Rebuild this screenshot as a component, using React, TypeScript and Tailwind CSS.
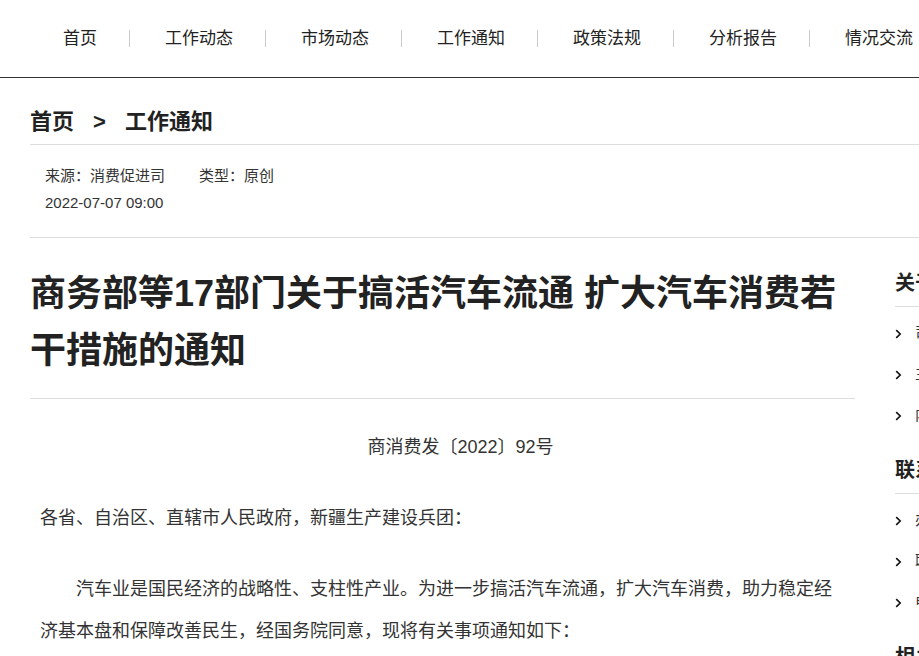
import { Fragment } from 'react';

const navItems = ['首页', '工作动态', '市场动态', '工作通知', '政策法规', '分析报告', '情况交流'];

const sideGroups = [
  { title: '关于我们', items: ['司局简介', '主要职责', '内设机构'] },
  { title: '联系我们', items: ['办公地址', '联系电话', '电子邮箱'] },
  { title: '相关链接', items: ['商务部', '国务院'] },
];

function Chevron() {
  return (
    <svg width="7" height="10" viewBox="0 0 7 10" className="shrink-0">
      <path d="M1.2 1.2l4 3.8-4 3.8" fill="none" stroke="#111" strokeWidth="1.6" />
    </svg>
  );
}

export default function App() {
  return (
    <div className="h-[656px] w-full overflow-hidden bg-white text-[#333] font-['Liberation_Sans','Noto_Sans_CJK_SC',sans-serif]">
      {/* Top nav */}
      <div className="h-[78px] border-b border-[#333]">
        <nav className="flex h-full items-center whitespace-nowrap pl-[28px]">
          {navItems.map((item, i) => (
            <Fragment key={item}>
              {i > 0 && <span className="h-[17px] w-px shrink-0 bg-[#ccc]" />}
              <a className="shrink-0 pl-[35px] pr-[32px] text-[17px] leading-none text-[#222]">{item}</a>
            </Fragment>
          ))}
        </nav>
      </div>

      <div className="ml-[30px] w-[1200px]">
        {/* Breadcrumb */}
        <div className="flex items-center border-b border-[#ddd] pt-[29px] pb-[7px] text-[22px] font-bold leading-[30px] text-[#222]">
          <span>首页</span>
          <span className="mx-[19px]">&gt;</span>
          <span>工作通知</span>
        </div>

        {/* Meta */}
        <div className="border-b border-[#ddd] pl-[15px] pt-[17px] pb-[21px] text-[15px] leading-[27px] text-[#333]">
          <div className="flex">
            <span>来源：消费促进司</span>
            <span className="ml-[34px]">类型：原创</span>
          </div>
          <div>2022-07-07 09:00</div>
        </div>

        <div className="flex">
          {/* Article */}
          <div className="w-[825px] shrink-0">
            <h1 className="border-b border-[#ddd] pt-[27px] pb-[19px] text-[36px] font-bold leading-[57px] text-[#222]">
              商务部等17部门关于搞活汽车流通 扩大汽车消费若干措施的通知
            </h1>
            <div className="px-[10px] pt-[27px] text-[18px] leading-[42px] text-[#333]">
              <p className="text-center indent-[2em]">商消费发〔2022〕92号</p>
              <p className="mt-[29px]">各省、自治区、直辖市人民政府，新疆生产建设兵团：</p>
              <p className="mt-[29px] indent-[2em]">
                汽车业是国民经济的战略性、支柱性产业。为进一步搞活汽车流通，扩大汽车消费，助力稳定经济基本盘和保障改善民生，经国务院同意，现将有关事项通知如下：
              </p>
            </div>
          </div>

          {/* Sidebar */}
          <aside className="ml-[40px] w-[335px] shrink-0 pt-[30px]">
            {sideGroups.map((g) => (
              <div key={g.title} className="mb-[19px]">
                <h3 className="border-b border-[#ddd] pb-[8px] text-[20px] font-bold leading-[30px] text-[#222]">{g.title}</h3>
                <ul className="pt-[6px]">
                  {g.items.map((it) => (
                    <li key={it} className="flex h-[41px] items-center gap-[13px] text-[15px] text-[#333]">
                      <Chevron />
                      <span>{it}</span>
                    </li>
                  ))}
                </ul>
              </div>
            ))}
          </aside>
        </div>
      </div>
    </div>
  );
}
